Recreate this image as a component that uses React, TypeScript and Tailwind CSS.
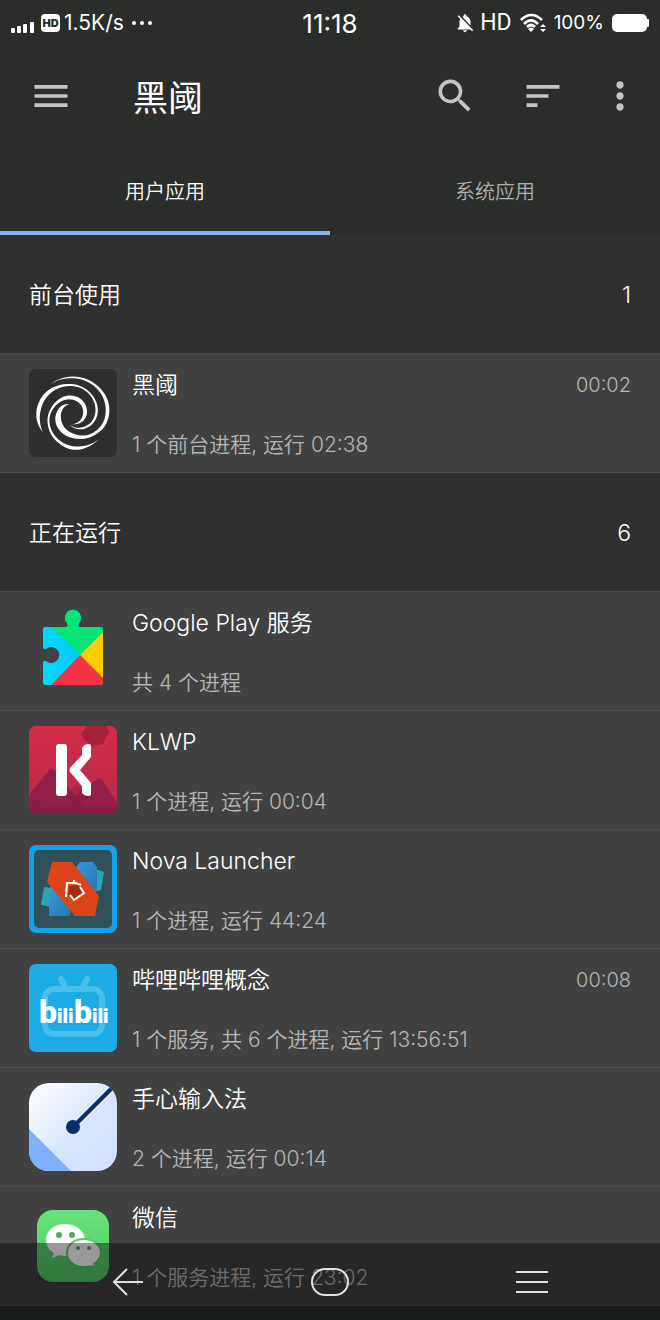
import type { ReactNode } from 'react';
import { MdMenu, MdMoreVert, MdNotificationsOff, MdSearch, MdSort } from 'react-icons/md';

type AppItem = {
  name: string;
  detail: string;
  time?: string;
  icon: ReactNode;
};

// each point is [angle in degrees, radius, stroke width] along one arm of the swirl
const swirlArms = [
  [[231, 109, 0], [270, 107, 5], [319, 107, 8], [348, 106, 11], [379, 100, 10], [412, 86, 9], [451, 68, 14], [501, 52, 19], [543, 41, 14], [612, 28, 0]],
  [[147, 107, 0], [176, 104, 11], [213, 97, 12], [252, 87, 7], [295, 80, 5], [350, 73, 7], [380, 67, 7], [413, 56, 6], [465, 36, 0]],
  [[46, 111, 0], [85, 106, 10], [119, 94, 8], [163, 76, 6], [208, 58, 8], [263, 47, 12], [322, 40, 12], [380, 36, 10], [452, 33, 0]],
];

function spline(a: number, b: number, c: number, d: number, t: number) {
  return 0.5 * (2 * b + (c - a) * t + (2 * a - 5 * b + 4 * c - d) * t * t + (3 * b - a - 3 * c + d) * t * t * t);
}

function armPath(points: number[][]) {
  const outer: string[] = [];
  const inner: string[] = [];
  const last = points.length - 1;
  for (let i = 0; i < last; i++) {
    const near = [points[Math.max(0, i - 1)], points[i], points[i + 1], points[Math.min(last, i + 2)]];
    for (let t = 0; t <= 1; t += 0.125) {
      const [angle, radius, width] = [0, 1, 2].map((k) => spline(near[0][k], near[1][k], near[2][k], near[3][k], t));
      const a = (angle * Math.PI) / 180;
      const half = Math.max(0, width) / 2;
      const point = (d: number) => `${(131 + Math.cos(a) * d).toFixed(1)} ${(132 + Math.sin(a) * d).toFixed(1)}`;
      outer.push(point(radius + half));
      inner.unshift(point(radius - half));
    }
  }
  return `M${[...outer, ...inner].join('L')}Z`;
}

function SwirlIcon() {
  return (
    <svg viewBox="0 0 264 264" className="size-full">
      <rect width="264" height="264" rx="20" fill="#2d2f2d" />
      {swirlArms.map((arm) => (
        <path key={arm[0][0]} d={armPath(arm)} fill="#fff" />
      ))}
    </svg>
  );
}

function PlayServicesIcon() {
  return (
    <svg viewBox="0 0 88 88" className="size-full">
      <defs>
        <clipPath id="puzzle">
          <path d="M16 20H37Q40 20 38 16A8 8 0 1 1 50 16Q48 20 51 20H71Q74 20 74 23V75Q74 78 71 78H17Q14 78 14 75V56Q14 53 17 54A8 8 0 1 0 17 42Q14 43 14 40V22Q14 20 16 20Z" />
        </clipPath>
        <linearGradient id="playBlue" x1="0" y1="0" x2="1" y2="0">
          <stop offset="0" stopColor="#00e0ff" />
          <stop offset="1" stopColor="#08b8f8" />
        </linearGradient>
      </defs>
      <g clipPath="url(#puzzle)">
        <rect width="88" height="88" fill="url(#playBlue)" />
        <path d="M18 16L51 48L80 19V0H18Z" fill="#04e576" />
        <path d="M51 48L80 19V77Z" fill="#fecb05" />
        <path d="M51 48L20 80H83Z" fill="#f43446" />
      </g>
    </svg>
  );
}

function KlwpIcon() {
  return (
    <svg viewBox="0 0 88 88" className="size-full">
      <defs>
        <clipPath id="klwpTile">
          <rect width="88" height="88" rx="7" />
        </clipPath>
        <linearGradient id="klwpSky" x1="0" y1="0" x2="0" y2="1">
          <stop offset="0" stopColor="#d52c46" />
          <stop offset="1" stopColor="#b32b4c" />
        </linearGradient>
      </defs>
      <g clipPath="url(#klwpTile)">
        <rect width="88" height="88" fill="url(#klwpSky)" />
        <path d="M58 0H78L80 6L74 18L64 20L54 13L53 7Z" fill="#a8213b" />
        <path d="M0 69L20 44Q23 41 26 45L46 70L68 53Q71 51 74 55L88 77V88H0Z" fill="#94204a" />
        <path d="M0 72L30 78L88 80V88H0Z" fill="#861d4a" opacity="0.6" />
        <path d="M37 69L48 58L60 70L50 84Z" fill="#7d1a40" opacity="0.35" />
      </g>
      <rect x="27" y="18" width="11" height="52" rx="3" fill="#fff" />
      <path d="M60 18Q62 18 62 20V31L51 44L62 57V68Q62 70 60 70Q55 70 53 67V60L41 46Q40 44 41 42L53 29V22Q55 18 60 18Z" fill="#fff" />
    </svg>
  );
}

function NovaIcon() {
  return (
    <svg viewBox="0 0 88 88" className="size-full">
      <defs>
        <linearGradient id="novaBlue" x1="0" y1="0" x2="1" y2="1">
          <stop offset="0" stopColor="#3d96d8" />
          <stop offset="1" stopColor="#2378b0" />
        </linearGradient>
      </defs>
      <rect width="88" height="88" rx="7" fill="#15a0e8" />
      <rect x="5" y="5" width="78" height="78" rx="5" fill="#30505a" />
      <path d="M66 24L75 27L72 45L64 47Z" fill="#2ba6b0" />
      <path d="M15 42L23 43L23 62L12 60Z" fill="#2ba6b0" />
      <path d="M47 22L51 17H64L68 22V45L61 46Z" fill="url(#novaBlue)" />
      <path d="M21 42H31L42 68L40 71H20V52Z" fill="url(#novaBlue)" />
      <path d="M23 17H43L70 51L66 71H46L18 37Z" fill="#dc441a" />
      <path d="M40 41L50 40L54 48L46 54L39 50Z" fill="#a62d12" />
      <path d="M37 52L38 38H45V35M46 38L52 40M51 42L55 48L45 55L41 50" fill="none" stroke="#fff" strokeWidth="2" />
    </svg>
  );
}

function BilibiliIcon() {
  return (
    <svg viewBox="0 0 88 88" className="size-full">
      <rect width="88" height="88" rx="7" fill="#1cabe4" />
      <g fill="none" stroke="#4cbeea" strokeWidth="6" strokeLinecap="round">
        <rect x="16" y="25" width="57" height="45" rx="9" />
        <path d="M32 15L36 23M58 15L54 23" />
      </g>
      <g fill="#fff" fontFamily="Roboto, 'Liberation Sans', sans-serif" fontWeight="900">
        <text x="10" y="59">
          <tspan fontSize="32">b</tspan>
          <tspan fontSize="20">ili</tspan>
        </text>
        <text x="45" y="59">
          <tspan fontSize="32">b</tspan>
          <tspan fontSize="20">ili</tspan>
        </text>
      </g>
    </svg>
  );
}

function PalmInputIcon() {
  return (
    <svg viewBox="0 0 88 88" className="size-full">
      <defs>
        <clipPath id="palmTile">
          <rect width="88" height="88" rx="20" />
        </clipPath>
        <linearGradient id="palmFace" x1="0" y1="0" x2="1" y2="1">
          <stop offset="0.1" stopColor="#f8faff" />
          <stop offset="0.55" stopColor="#d9e6ff" />
          <stop offset="1" stopColor="#cfe0ff" />
        </linearGradient>
      </defs>
      <g clipPath="url(#palmTile)">
        <rect width="88" height="88" fill="url(#palmFace)" />
        <path d="M0 46L42 88H0Z" fill="#7db1fd" />
        <path d="M44 44L84 4" stroke="#062f6b" strokeWidth="4" />
        <circle cx="44" cy="44" r="7" fill="#062f6b" />
      </g>
    </svg>
  );
}

function WechatIcon() {
  return (
    <svg viewBox="0 0 72 72" className="size-[72px]">
      <defs>
        <linearGradient id="wechatTile" x1="0" y1="0" x2="0" y2="1">
          <stop offset="0" stopColor="#69e27c" />
          <stop offset="1" stopColor="#51c863" />
        </linearGradient>
      </defs>
      <rect width="72" height="72" rx="16" fill="url(#wechatTile)" />
      <path d="M28 14C17 14 9 21 9 30C9 36 12 40 17 43L15 48L22 45Q25 46 30 46C40 46 48 39 48 30C48 21 39 14 28 14Z" fill="#fff" />
      <circle cx="22" cy="25" r="3" fill="#4fa95f" />
      <circle cx="35" cy="25" r="3" fill="#4fa95f" />
      <path
        d="M47 29C37 29 30 35 30 43C30 51 37 57 47 57Q51 57 54 56L59 58L57 54C61 51 64 47 64 43C64 35 56 29 47 29Z"
        fill="#fff"
        stroke="#57cd69"
        strokeWidth="2"
      />
      <circle cx="41" cy="38" r="2" fill="#4fa95f" />
      <circle cx="52" cy="38" r="2" fill="#4fa95f" />
    </svg>
  );
}

const foreground: AppItem[] = [
  { name: '黑阈', detail: '1 个前台进程, 运行 02:38', time: '00:02', icon: <SwirlIcon /> },
];

const running: AppItem[] = [
  { name: 'Google Play 服务', detail: '共 4 个进程', icon: <PlayServicesIcon /> },
  { name: 'KLWP', detail: '1 个进程, 运行 00:04', icon: <KlwpIcon /> },
  { name: 'Nova Launcher', detail: '1 个进程, 运行 44:24', icon: <NovaIcon /> },
  { name: '哔哩哔哩概念', detail: '1 个服务, 共 6 个进程, 运行 13:56:51', time: '00:08', icon: <BilibiliIcon /> },
  { name: '手心输入法', detail: '2 个进程, 运行 00:14', icon: <PalmInputIcon /> },
  { name: '微信', detail: '1 个服务进程, 运行 23:02', icon: <WechatIcon /> },
];

function StatusBar() {
  return (
    <div className="grid h-[46px] grid-cols-3 items-center px-[11px] font-normal text-white">
      <div className="flex items-center">
        <svg viewBox="0 0 24 12" className="mt-2 h-3 w-6" fill="#fff">
          <rect y="7" width="4" height="5" rx="1" />
          <rect x="6" y="5" width="4" height="7" rx="1" />
          <rect x="12" y="3" width="4" height="9" rx="1" />
          <rect x="19" y="1" width="4" height="11" rx="1" />
        </svg>
        <span className="ml-[6px] flex h-[18px] w-[19px] items-center justify-center rounded bg-white text-[11px] font-black text-[#2b2d2a]">
          HD
        </span>
        <span className="ml-1 text-[21px]">1.5K/s</span>
        <svg viewBox="0 0 22 4" className="ml-2 h-1 w-[22px]" fill="#fff">
          <circle cx="2" cy="2" r="2" />
          <circle cx="10" cy="2" r="2" />
          <circle cx="18" cy="2" r="2" />
        </svg>
      </div>
      <div className="text-center text-[26px]">11:18</div>
      <div className="flex items-center justify-end whitespace-nowrap">
        <MdNotificationsOff className="size-[22px]" />
        <span className="ml-1 font-['Roboto'] text-[23px]">HD</span>
        <svg viewBox="0 0 26 20" className="ml-2 h-5 w-[26px]" fill="none" stroke="#fff" strokeWidth="2.6">
          <path d="M1 7Q11 -3 22 7M4 11Q11 4 18 11M7 14Q11 10 15 14" />
          <path d="M8 16Q11 13 14 16L11 19Z" fill="#fff" stroke="none" />
          <path d="M23 11L26 14H20ZM23 19L26 16H20Z" fill="#fff" stroke="none" />
        </svg>
        <span className="ml-2 text-[19px]">100%</span>
        <svg viewBox="0 0 37 18" className="ml-2 h-[18px] w-[37px] shrink-0" fill="#fff">
          <rect width="35" height="18" rx="5" />
          <rect x="33" y="5" width="4" height="8" rx="1" />
        </svg>
      </div>
    </div>
  );
}

function SectionHeader({ title, count }: { title: string; count: number }) {
  return (
    <h2 className="flex h-[119px] items-center justify-between border-b border-[#4a4a4a] bg-[#303030] px-[29px] pt-0.5 text-[23px] text-white">
      <span>{title}</span>
      <span>{count}</span>
    </h2>
  );
}

function AppRow({ name, detail, time, icon }: AppItem) {
  return (
    <li className="flex h-[119px] items-start border-b border-[#4d4d4d] bg-[#414141] px-[29px] pt-[15px]">
      <div className="flex size-[88px] shrink-0 items-center justify-center">{icon}</div>
      <div className="ml-[15px] min-w-0 flex-1">
        <div className="flex items-center justify-between">
          <h3 className="truncate text-[23px] leading-8 text-white">{name}</h3>
          {time && <time className="text-xl leading-8 text-[#b5b5b5]">{time}</time>}
        </div>
        <p className="mt-7 truncate text-[21px] leading-8 text-[#b5b5b5]">{detail}</p>
      </div>
    </li>
  );
}

export default function App() {
  return (
    <div className="min-h-screen bg-[#252d28] font-['Inter','Noto_Sans_CJK_SC',sans-serif] font-[350]">
      <header className="bg-[#2b2d2a]">
        <StatusBar />
        <div className="flex h-[100px] items-center pr-[7px] pl-[29px] text-[#c4c4c2]">
          <button aria-label="菜单">
            <MdMenu className="size-11" />
          </button>
          <h1 className="ml-[60px] flex-1 pt-1 text-[35px] font-normal text-white">黑阈</h1>
          <button aria-label="搜索" className="flex w-[88px] justify-center">
            <MdSearch className="size-11" />
          </button>
          <button aria-label="排序" className="flex w-[88px] justify-center">
            <MdSort className="size-11" />
          </button>
          <button aria-label="更多" className="flex w-[66px] justify-center">
            <MdMoreVert className="size-11" />
          </button>
        </div>
        <div role="tablist" className="grid h-[89px] grid-cols-2 text-xl">
          <button role="tab" aria-selected="true" className="border-b-4 border-[#8fb0ee] pt-1.5 text-white">
            用户应用
          </button>
          <button role="tab" aria-selected="false" className="border-b-4 border-transparent pt-1.5 text-[#b0b1af]">
            系统应用
          </button>
        </div>
      </header>

      <main>
        <SectionHeader title="前台使用" count={1} />
        <ul>
          {foreground.map((app) => (
            <AppRow key={app.name} {...app} />
          ))}
        </ul>
        <SectionHeader title="正在运行" count={6} />
        <ul>
          {running.map((app) => (
            <AppRow key={app.name} {...app} />
          ))}
        </ul>
      </main>

      <nav className="fixed inset-x-0 bottom-0 flex h-[77px] items-center justify-center gap-[162px] bg-black/40">
        <button aria-label="返回" className="flex w-10 justify-center">
          <svg viewBox="0 0 32 28" className="h-7 w-8" fill="none" stroke="#e0e0e0" strokeWidth="2">
            <path d="M15 1L2 14L15 27M2 14H31" />
          </svg>
        </button>
        <button aria-label="主页" className="flex w-10 justify-center">
          <svg viewBox="0 0 38 28" className="h-7 w-[38px]" fill="none" stroke="#e0e0e0" strokeWidth="2">
            <rect x="1" y="1" width="36" height="26" rx="13" />
          </svg>
        </button>
        <button aria-label="最近任务" className="flex w-10 justify-center">
          <svg viewBox="0 0 32 22" className="h-[22px] w-8" fill="#e0e0e0">
            <rect width="32" height="2" />
            <rect y="10" width="32" height="2" />
            <rect y="20" width="32" height="2" />
          </svg>
        </button>
      </nav>
    </div>
  );
}
